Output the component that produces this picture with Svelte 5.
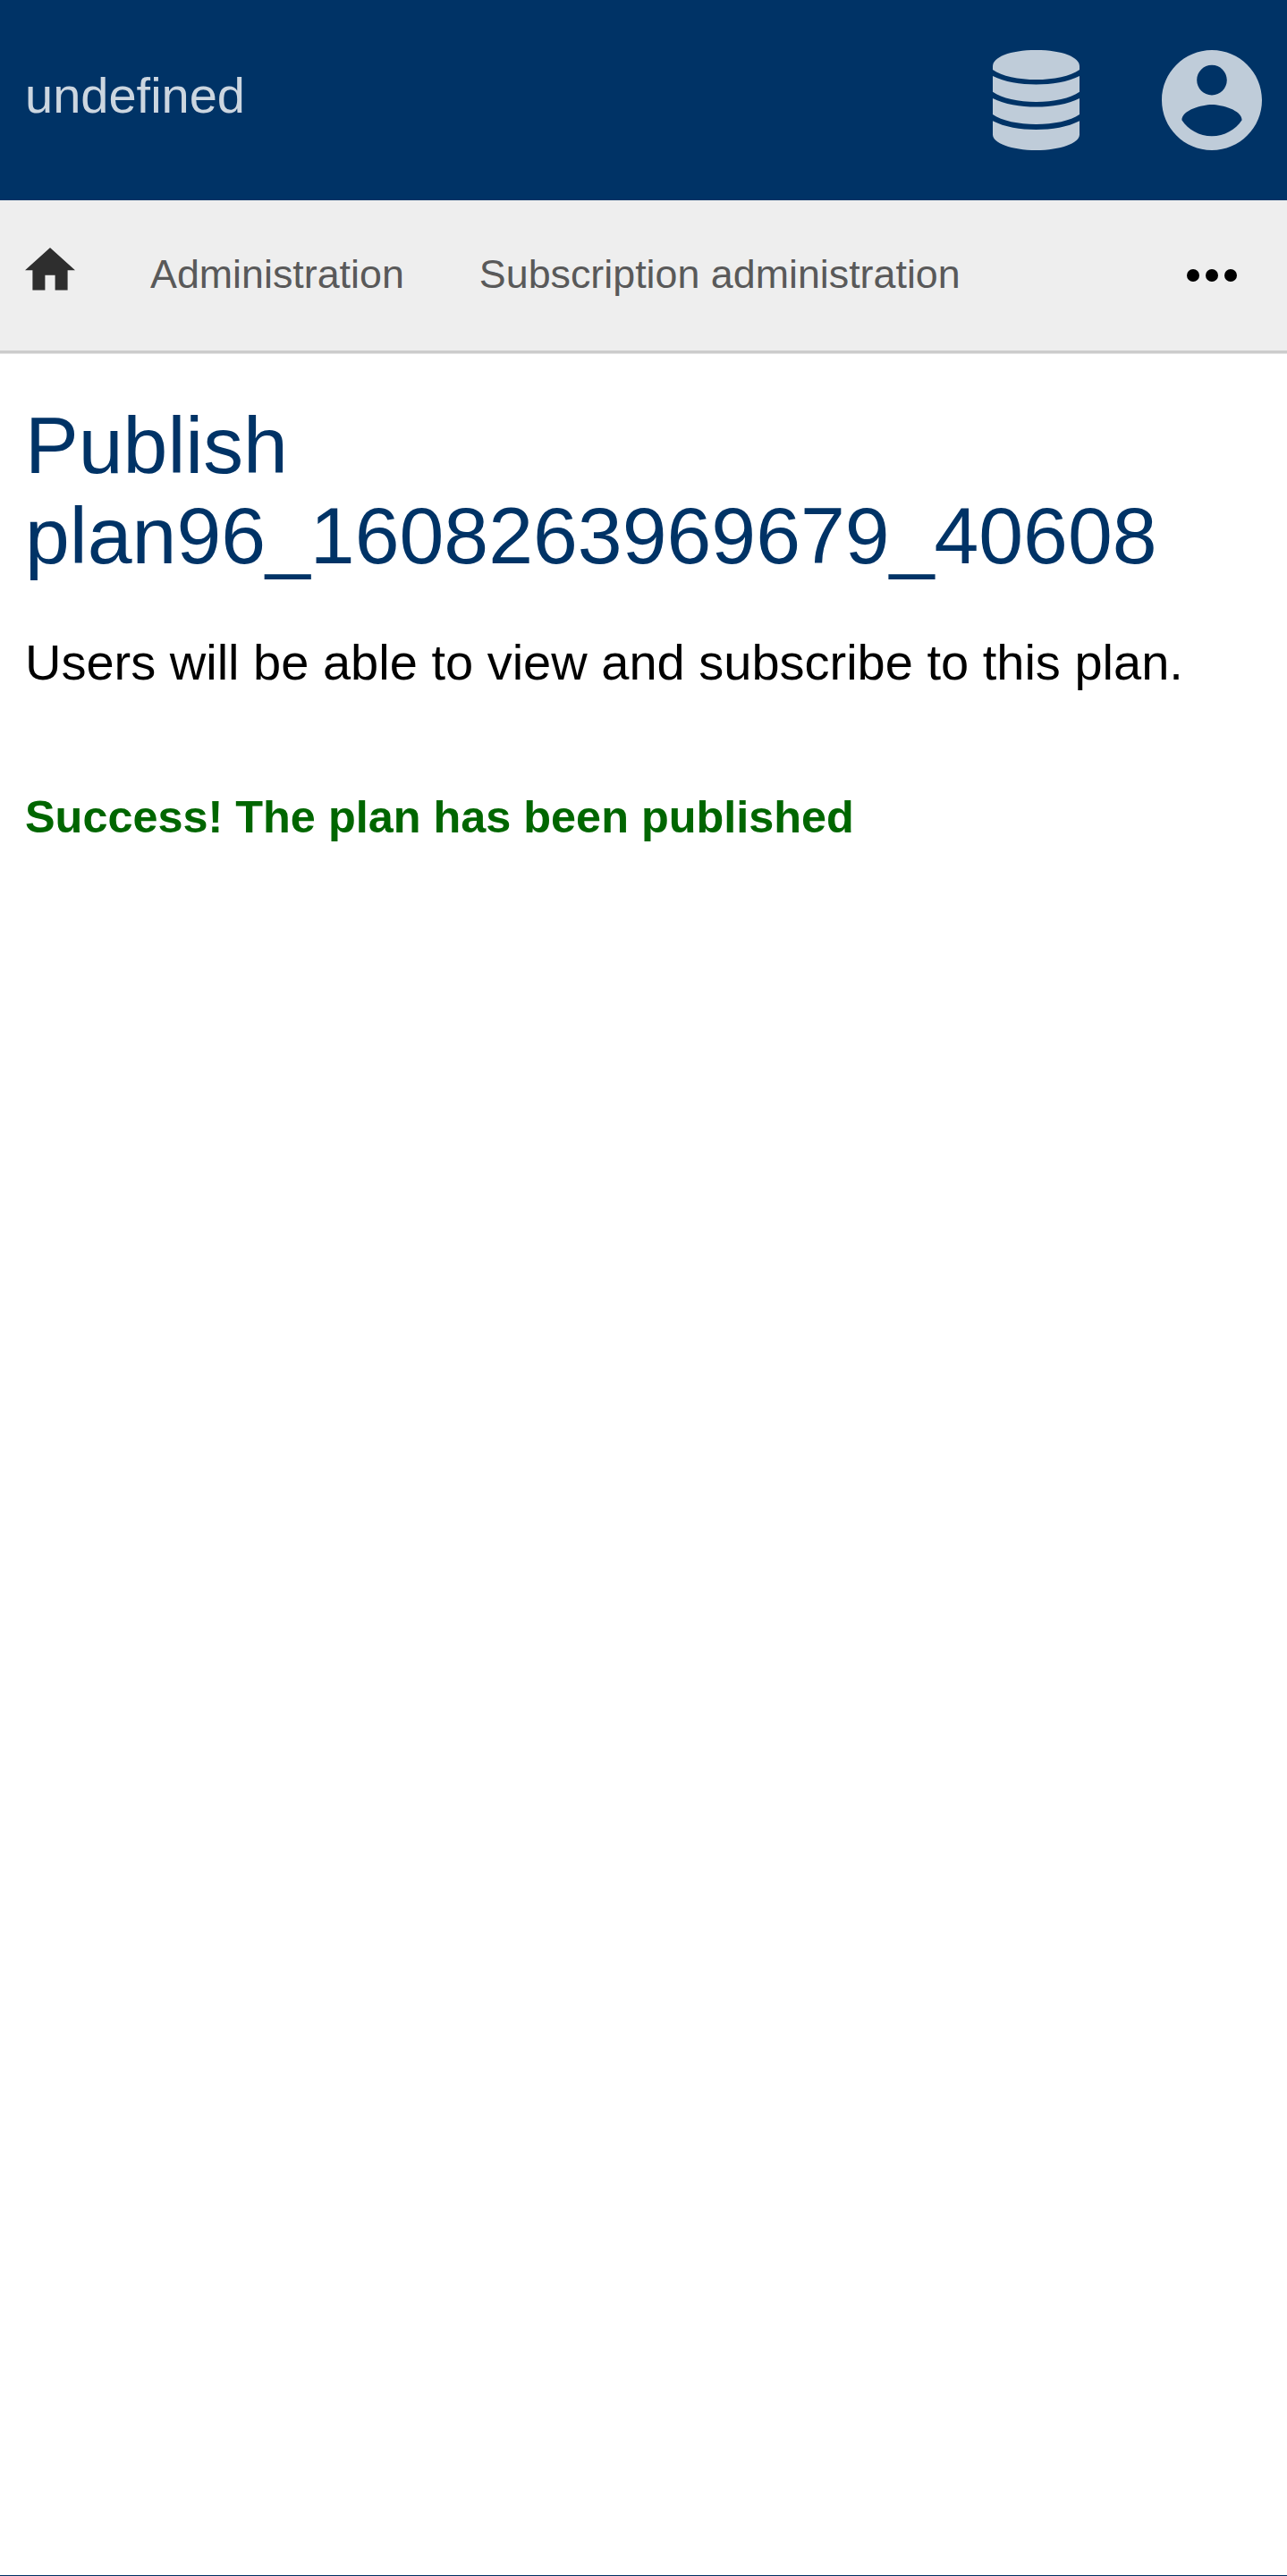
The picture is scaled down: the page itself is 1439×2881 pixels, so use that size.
<script>
  const links = ['Administration', 'Subscription administration'];
</script>

<div class="page">
  <header class="banner">
    <span class="brand">undefined</span>
    <div class="actions">
      <svg class="database" viewBox="0 0 97 112" aria-label="Data">
        <path d="M0 18C0 8 19 0 48.5 0S97 8 97 18V21.9C87 29 68 33 48.5 33S10 29 0 21.9Z" />
        <path d="M0 28.9C13 35.5 31 38.4 48.5 38.4S84 35.5 97 28.9V46.7C87 54 68 57.9 48.5 57.9S10 54 0 46.7Z" />
        <path d="M0 54C13 60.7 31 63.6 48.5 63.6S84 60.7 97 54V72C87 79 68 83 48.5 83S10 79 0 72Z" />
        <path d="M0 79.2C13 86 31 88.9 48.5 88.9S84 86 97 79.2V94.5C97 104 76 112 48.5 112S0 104 0 94.5Z" />
      </svg>
      <svg class="account" viewBox="2 2 20 20" aria-label="Account">
        <path d="M12 2C6.48 2 2 6.48 2 12s4.48 10 10 10 10-4.48 10-10S17.52 2 12 2zm0 3c1.66 0 3 1.34 3 3s-1.34 3-3 3-3-1.34-3-3 1.34-3 3-3zm0 14.2c-2.5 0-4.71-1.28-6-3.22.03-1.99 4-3.08 6-3.08 1.99 0 5.97 1.09 6 3.08-1.29 1.94-3.5 3.22-6 3.22z" />
      </svg>
    </div>
  </header>

  <nav class="navbar">
    <svg class="home" viewBox="2 3 20 17" aria-label="Home">
      <path d="M10 20v-6h4v6h5v-8h3L12 3 2 12h3v8z" />
    </svg>
    {#each links as link}
      <span class="link">{link}</span>
    {/each}
    <svg class="more" viewBox="0 0 56 14" aria-label="More">
      <circle cx="7" cy="7" r="7" />
      <circle cx="28" cy="7" r="7" />
      <circle cx="49" cy="7" r="7" />
    </svg>
  </nav>

  <main>
    <h1>Publish plan96_1608263969679_40608</h1>
    <p class="intro">Users will be able to view and subscribe to this plan.</p>
    <p class="success">Success! The plan has been published</p>
  </main>
</div>

<style>
  :global(body) {
    margin: 0;
    background: #fff;
  }
  .page {
    box-sizing: border-box;
    display: flex;
    flex-direction: column;
    height: 2881px;
    border-bottom: 1px solid #036;
    font-family: "Liberation Sans", Arial, sans-serif;
    font-size: 56px;
    color: #000;
  }
  .banner {
    box-sizing: border-box;
    display: flex;
    justify-content: space-between;
    height: 224px;
    padding: 56px 28px;
    background: #036;
  }
  .brand {
    line-height: 101px;
    color: #ccd6e0;
  }
  .actions {
    display: flex;
    gap: 92px;
    fill: #bfccd9;
  }
  .database {
    width: 97px;
    height: 112px;
  }
  .account {
    width: 112px;
    height: 112px;
  }
  .navbar {
    box-sizing: content-box;
    display: flex;
    align-items: flex-start;
    height: 168px;
    padding: 0 56px 0 28px;
    border-bottom: 3px solid #ccc;
    box-shadow: 0 1px 0 #e5e5e5;
    background: #eee;
    font-size: 44.8px;
  }
  .home {
    width: 56px;
    height: 47.6px;
    margin-top: 53.2px;
    fill: #2e2e2e;
  }
  .link {
    margin-left: 84px;
    line-height: 164px;
    color: #595959;
  }
  .more {
    width: 56px;
    height: 14px;
    margin: 77px 0 0 auto;
  }
  main {
    padding: 53px 28px 0;
  }
  h1 {
    margin: 0;
    font-size: 89.6px;
    font-weight: 400;
    line-height: 101px;
    color: #036;
  }
  .intro {
    margin: 59px 0 0;
    line-height: 63px;
  }
  .success {
    margin: 113px 0 0;
    font-size: 50.4px;
    font-weight: 700;
    line-height: 57px;
    color: #060;
  }
</style>
